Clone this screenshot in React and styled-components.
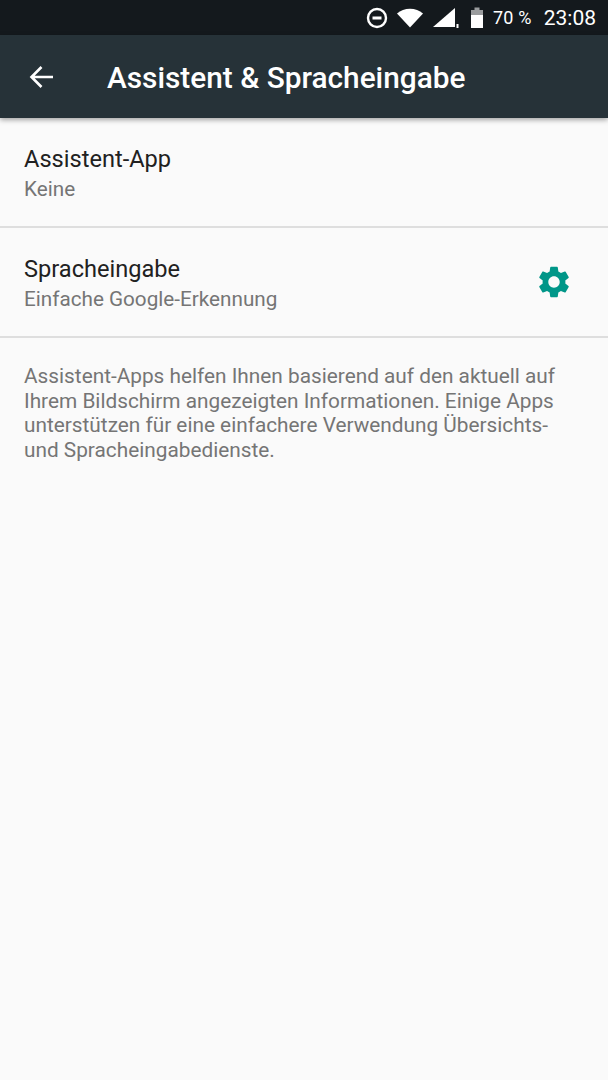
import styled, { createGlobalStyle } from "styled-components";

const GlobalStyle = createGlobalStyle`
  html, body {
    margin: 0;
    padding: 0;
    background: #fafafa;
    font-family: Roboto, "Liberation Sans", sans-serif;
  }
`;

const Screen = styled.div`
  width: 608px;
  height: 1080px;
  background: #fafafa;
  overflow: hidden;
`;

const StatusBar = styled.div`
  height: 35px;
  background: #14191d;
  color: #fff;
  display: flex;
  align-items: center;
  justify-content: flex-end;
  padding-right: 12px;
`;

const StatusIcon = styled.svg`
  display: block;
  flex: none;
  margin-right: ${(props) => props.$gap || 0}px;
`;

const BatteryText = styled.span`
  font-size: 18px;
  margin-right: 12px;
  letter-spacing: 0.2px;
`;

const Clock = styled.span`
  font-size: 21px;
`;

const AppBar = styled.header`
  height: 83px;
  background: #263238;
  display: flex;
  align-items: center;
  box-shadow: 0 2px 5px rgba(0, 0, 0, 0.35);
  position: relative;
  padding-left: 29px;
`;

const BackIcon = styled.svg`
  display: block;
  flex: none;
  margin-right: 53px;
`;

const Title = styled.h1`
  margin: 2px 0 0;
  color: #fff;
  font-size: 29.8px;
  font-weight: 500;
  white-space: nowrap;
`;

const Row = styled.div`
  height: 108px;
  border-bottom: 2px solid #dedede;
  display: flex;
  align-items: center;
  justify-content: space-between;
  padding: 0 35px 0 24px;
  box-sizing: content-box;
`;

const RowText = styled.div`
  display: flex;
  flex-direction: column;
  padding-top: 4px;
`;

const RowTitle = styled.div`
  color: #212121;
  font-size: 23.6px;
  line-height: 30px;
`;

const RowSub = styled.div`
  color: #757575;
  font-size: 20.7px;
  line-height: 30px;
`;

const Note = styled.p`
  margin: 0;
  padding: 26px 24px 0;
  color: #757575;
  font-size: 20.8px;
  line-height: 24.5px;
  white-space: nowrap;
`;

const GEAR =
  "M19.14 12.94c.04-.3.06-.61.06-.94 0-.32-.02-.64-.07-.94l2.03-1.58a.49.49 0 0 0 .12-.61l-1.92-3.32a.49.49 0 0 0-.59-.22l-2.39.96c-.5-.38-1.03-.7-1.62-.94l-.36-2.54a.48.48 0 0 0-.48-.41h-3.84c-.24 0-.43.17-.47.41l-.36 2.54c-.59.24-1.13.57-1.62.94l-2.39-.96c-.22-.08-.47 0-.59.22L2.74 8.87c-.12.21-.08.47.12.61l2.03 1.58c-.05.3-.09.63-.09.94s.02.64.07.94l-2.03 1.58a.49.49 0 0 0-.12.61l1.92 3.32c.12.22.37.29.59.22l2.39-.96c.5.38 1.03.7 1.62.94l.36 2.54c.05.24.24.41.48.41h3.84c.24 0 .44-.17.47-.41l.36-2.54c.59-.24 1.13-.56 1.62-.94l2.39.96c.22.08.47 0 .59-.22l1.92-3.32c.12-.22.07-.47-.12-.61l-2.01-1.58zM12 15.6c-1.98 0-3.6-1.62-3.6-3.6s1.62-3.6 3.6-3.6 3.6 1.62 3.6 3.6-1.62 3.6-3.6 3.6z";

const App = () => (
  <Screen>
    <GlobalStyle />
    <StatusBar>
      <StatusIcon $gap={8} width="22" height="22" viewBox="0 0 22 22">
        <circle cx="11" cy="11" r="9" fill="none" stroke="#fff" strokeWidth="2.4" />
        <rect x="6.5" y="9.5" width="9" height="3" fill="#fff" />
      </StatusIcon>
      <StatusIcon $gap={8} width="28" height="20" viewBox="0 0 28 20">
        <path d="M14 19.5 1 5.5C4.5 2.5 9 .8 14 .8s9.500 1.700 13 4.700z" fill="#fff" />
      </StatusIcon>
      <StatusIcon $gap={10} width="28" height="22" viewBox="0 0 28 22">
        <path d="M1 20 23 1v19z" fill="#fff" />
        <rect x="24.500" y="17" width="2" height="4" fill="#fff" />
      </StatusIcon>
      <StatusIcon $gap={9} width="14" height="22" viewBox="0 0 14 22">
        <rect x="4.500" y="0.500" width="5" height="3" fill="#9a9c9e" />
        <rect x="1" y="3" width="12" height="6" fill="#9a9c9e" />
        <rect x="1" y="8" width="12" height="13" fill="#fff" />
      </StatusIcon>
      <BatteryText>70 %</BatteryText>
      <Clock>23:08</Clock>
    </StatusBar>
    <AppBar>
      <BackIcon width="25" height="24" viewBox="0 0 25 24">
        <path d="M24 12H2.500M12.500 2 2.500 12l10 10" fill="none" stroke="#fff" strokeWidth="2.600" />
      </BackIcon>
      <Title>Assistent &amp; Spracheingabe</Title>
    </AppBar>
    <Row>
      <RowText>
        <RowTitle>Assistent-App</RowTitle>
        <RowSub>Keine</RowSub>
      </RowText>
    </Row>
    <Row>
      <RowText>
        <RowTitle>Spracheingabe</RowTitle>
        <RowSub>Einfache Google-Erkennung</RowSub>
      </RowText>
      <svg width="38" height="38" viewBox="0 0 24 24">
        <path d={GEAR} fill="#009688" />
      </svg>
    </Row>
    <Note>
      Assistent-Apps helfen Ihnen basierend auf den aktuell auf
      <br />
      Ihrem Bildschirm angezeigten Informationen. Einige Apps
      <br />
      unterstützen für eine einfachere Verwendung Übersichts-
      <br />
      und Spracheingabedienste.
    </Note>
  </Screen>
);

export default App;
